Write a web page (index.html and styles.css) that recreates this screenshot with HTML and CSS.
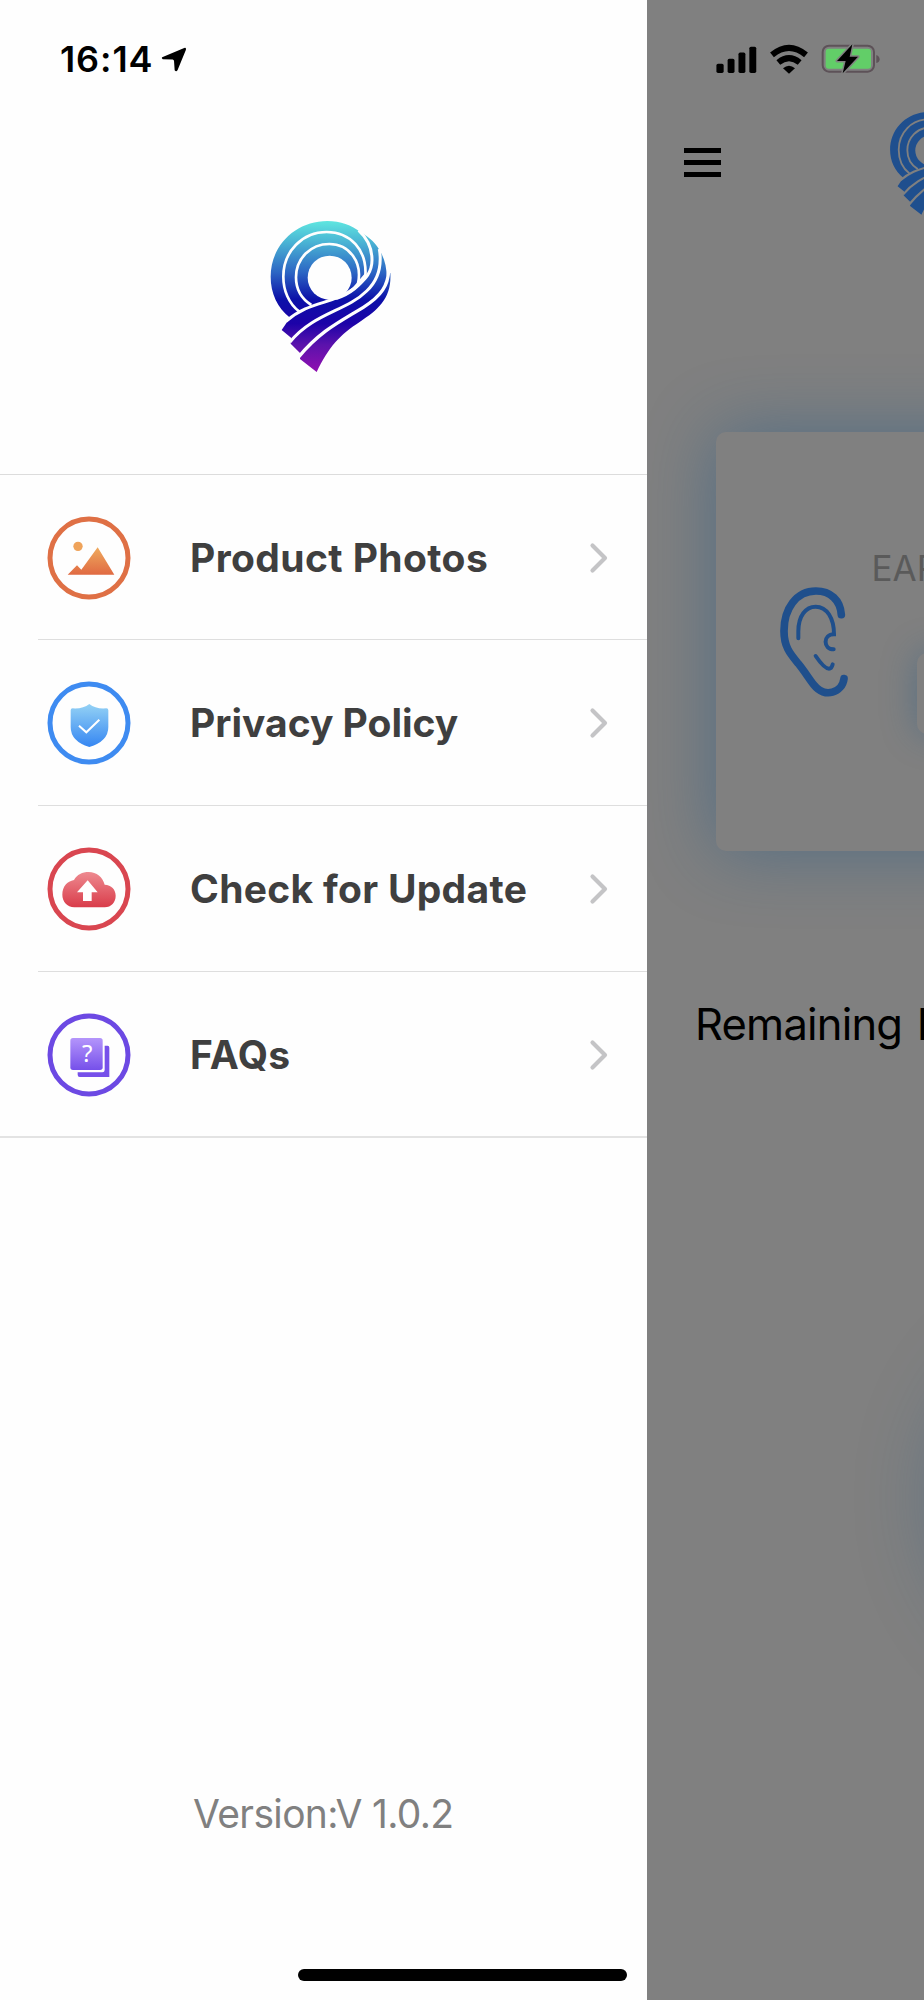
FILE: index.html
```html
<!DOCTYPE html>
<html lang="en">
<head>
<meta charset="utf-8">
<title>Menu</title>
<link rel="stylesheet" href="styles.css">
</head>
<body>
<svg class="defs" width="0" height="0" aria-hidden="true">
  <defs>
    <linearGradient id="gLogo" gradientUnits="userSpaceOnUse" x1="0" y1="48" x2="0" y2="500">
      <stop offset="0" stop-color="#5fe6e0"/><stop offset=".14" stop-color="#4ab4d4"/><stop offset=".34" stop-color="#2c66c4"/><stop offset=".52" stop-color="#0c10a8"/><stop offset=".68" stop-color="#1c02a8"/><stop offset=".82" stop-color="#5a12ac"/><stop offset="1" stop-color="#9010b0"/>
    </linearGradient>
    <linearGradient id="gOrange" x1="0" y1="0" x2="0" y2="1"><stop offset="0" stop-color="#efaa5e"/><stop offset="1" stop-color="#e06a42"/></linearGradient>
    <linearGradient id="gBlue" x1="0" y1="0" x2="0" y2="1"><stop offset="0" stop-color="#94d2f5"/><stop offset="1" stop-color="#3586f2"/></linearGradient>
    <linearGradient id="gRed" x1="0" y1="0" x2="0" y2="1"><stop offset="0" stop-color="#ee8a90"/><stop offset="1" stop-color="#d93c4a"/></linearGradient>
    <linearGradient id="gPurple" x1="0" y1="0" x2="0" y2="1"><stop offset="0" stop-color="#b495fb"/><stop offset="1" stop-color="#7650ea"/></linearGradient>
    <mask id="cuts" maskUnits="userSpaceOnUse" x="0" y="0" width="480" height="540">
      <rect width="480" height="540" fill="#fff"/>
      <circle cx="239" cy="218" r="66" fill="#000"/>
      <path d="M250 284Q300 262 322 232L345 205L352 212Q325 262 262 284Z" fill="#000"/>
      <g fill="none" stroke="#000" stroke-width="8">
        <path d="M148 320C116 296 100 256 100 215C100 138 158 81 230 81C300 81 352 134 346 214"/>
        <path d="M184 300C155 282 138 252 138 217C138 160 182 117 238 117C298 117 338 172 324 236"/>
        <path stroke-width="9" d="M108 349C180 286 245 300 310 252C350 222 366 200 366 165C366 130 350 98 326 76"/>
        <path stroke-width="9" d="M120 411C190 325 290 318 350 258C388 222 396 180 388 132"/>
        <path stroke-width="10" d="M146 456C210 378 270 350 340 307C396 272 414 240 416 196"/>
      </g>
    </mask>
    <symbol id="logo" viewBox="0 0 480 540">
      <path mask="url(#cuts)" d="M120 338C82 308 62 264 62 215C62 120 138 48 232 48C272 48 304 60 332 82C360 98 380 118 390 138C404 160 410 188 411 222L421 203C426 278 386 314 330 350C270 388 236 426 200 501L150 462L150 444L122 416L124 399L95 375Z"/>
    </symbol>
    <symbol id="chevron" viewBox="0 0 20 32"><path d="M3.5 3.5L16 16L3.5 28.500" fill="none" stroke="#c4c4c6" stroke-width="4.200" stroke-linecap="round" stroke-linejoin="round"/></symbol>
  </defs>
</svg>
<div class="screen">
  <aside class="drawer">
    <div class="clock">
      <span class="time">16:14</span>
      <svg class="location" viewBox="0 0 78 76"><path d="M3 31L70 3Q77 1 75 9L50 70Q46 77 41 71L39 42Q38 39 35 38L5 37Q0 35 3 31Z"/></svg>
    </div>
    <svg class="brand"><use href="#logo" fill="url(#gLogo)"/></svg>
    <ul class="menu">
      <li class="item">
        <svg class="icon" viewBox="0 0 252 252"><circle cx="126" cy="126" r="117" fill="none" stroke="#df7045" stroke-width="15"/><circle cx="93" cy="91" r="14" fill="#efa35a"/><path fill="url(#gOrange)" d="M62 176L90 148L103 161L152 94L202 176Z"/></svg>
        <span class="label">Product Photos</span><svg class="chevron"><use href="#chevron"/></svg>
      </li>
      <li class="item">
        <svg class="icon" viewBox="0 0 252 252"><circle cx="126" cy="126" r="117" fill="none" stroke="#3e8bf1" stroke-width="15"/><path fill="url(#gBlue)" d="M127 69Q147 85 178 82Q184 82 184 88V138Q184 181 127 198Q71 181 71 138V88Q71 82 77 82Q108 84 127 69Z"/><path d="M96 134L118 154L157 116" fill="none" stroke="#fff" stroke-width="6"/></svg>
        <span class="label privacy">Privacy Policy</span><svg class="chevron"><use href="#chevron"/></svg>
      </li>
      <li class="item">
        <svg class="icon" viewBox="0 0 252 252"><circle cx="126" cy="126" r="117" fill="none" stroke="#d94650" stroke-width="15"/><path fill="url(#gRed)" d="M82 181C60 179 46 164 46 143C46 119 60 103 81 99C90 83 106 75 125 75C149 75 167 90 173 113C193 114 206 127 206 146C206 166 193 180 173 181Z"/><path fill="#fff" d="M122 100L152 136H134V162H108V136H90Z"/></svg>
        <span class="label update">Check for Update</span><svg class="chevron"><use href="#chevron"/></svg>
      </li>
      <li class="item">
        <svg class="icon" viewBox="0 0 252 252"><circle cx="126" cy="126" r="117" fill="none" stroke="#6c49e3" stroke-width="15"/><rect x="70" y="75" width="97" height="96" rx="8" fill="url(#gPurple)"/><path fill="#7650ea" d="M173 98H182Q187 98 187 104V192H98Q92 192 92 185V178H166Q173 178 173 171Z"/><text class="question" x="121" y="147" text-anchor="middle">?</text></svg>
        <span class="label">FAQs</span><svg class="chevron"><use href="#chevron"/></svg>
      </li>
    </ul>
    <div class="version">Version:V 1.0.2</div>
    <div class="home-bar"></div>
  </aside>
  <main class="page">
    <div class="status">
      <svg class="signal" viewBox="0 0 122 82"><rect x="0" y="54" width="22" height="28" rx="5"/><rect x="34" y="39" width="21" height="43" rx="5"/><rect x="67" y="20" width="21" height="62" rx="5"/><rect x="100" y="2" width="21" height="80" rx="5"/></svg>
      <svg class="wifi" viewBox="0 0 114 86"><g fill="none" stroke="#000" stroke-width="18"><path d="M6 29Q57-13 108 29"/><path d="M25 52Q57 26 89 52"/></g><path d="M39 69Q57 54 75 69L57 86Z"/></svg>
      <svg class="battery" viewBox="0 0 180 90"><rect x="5" y="5" width="154" height="78" rx="19" fill="none" stroke="#5d5258" stroke-width="6"/><rect x="14" y="14" width="136" height="60" rx="9" fill="#62ce68"/><path d="M166 33Q176 37 176 46T166 57Z" fill="#5d5258"/><path d="M94 1L48 51H74L65 88L111 38H86Z" fill="#000" stroke="#808080" stroke-width="9" paint-order="stroke" stroke-linejoin="round"/></svg>
    </div>
    <div class="topbar">
      <div class="burger"><i></i><i></i><i></i></div>
      <svg class="brand-small"><use href="#logo" fill="#1f4f8e"/></svg>
    </div>
    <section class="card">
      <svg class="ear" viewBox="0 0 204 330" fill="none" stroke="#1f4f8c" stroke-linecap="round"><path stroke-width="23" d="M184 83C181 39 151 12 108 12C48 12 12 66 12 132C12 180 31 201 55 230C73 252 86 274 101 293C135 337 187 315 192 275"/><path stroke-width="12" d="M55 154V133C55 87 77 59 107 59C141 59 162 94 162 142C128 142 129 187 161 187M107 207C124 232 137 245 147 245Q155 245 158 232"/></svg>
      <div class="reading"><div class="ear-label">EAR</div><div class="value"></div></div>
    </section>
    <h2 class="remaining">Remaining Battery</h2>
    <div class="dial"></div>
  </main>
</div>
</body>
</html>
```
FILE: styles.css
```css
* { box-sizing: border-box; }
body { margin: 0; font-family: Inter, "Liberation Sans", sans-serif; background: #fff; }
svg { display: block; flex: none; }
.defs { position: absolute; }
.screen { display: flex; width: 924px; height: 2000px; overflow: hidden; }

.drawer { display: flex; flex-direction: column; flex: none; width: 646.500px; height: 2000px; background: #fefefe; }
.clock { display: flex; align-items: center; height: 118px; padding-left: 60px; }
.time { width: 101px; font-size: 36px; font-weight: 600; letter-spacing: .9px; }
.location { width: 26px; height: 25px; }
.brand { width: 160px; height: 180px; margin: 87px 0 89px 250px; }
.menu { list-style: none; margin: 0; padding: 0; border-top: 1px solid #dcdcdc; border-bottom: 2px solid #e3e3e3; }
.item { display: flex; align-items: center; height: 165.700px; margin-left: 38px; padding: 1px 0 0 9px; }
.item:first-child { height: 164.300px; }
.item + .item { border-top: 1.500px solid #dedede; }
.icon { width: 84px; height: 84px; }
.label { flex: 1; margin-left: 59px; font-size: 39px; font-weight: 700; line-height: 48px; letter-spacing: .4px; color: #3f3f3f; white-space: nowrap; }
.privacy { letter-spacing: 0; }
.update { letter-spacing: .3px; }
.question { font: 72px "Noto Sans", sans-serif; fill: #fff; }
.chevron { width: 20px; height: 32px; margin-right: 38px; }
.version { margin: 652px 0 0 193px; font-size: 39px; line-height: 48px; letter-spacing: -.65px; color: #808080; white-space: nowrap; }
.home-bar { width: 329px; height: 12px; margin: auto 0 19px 298px; border-radius: 6px; background: #000; }

.page { flex: 1; min-width: 0; height: 2000px; overflow: hidden; background: #808080; }
.status { display: flex; align-items: center; height: 118px; padding-left: 69px; }
.signal { width: 41px; height: 27px; }
.wifi { width: 38px; height: 29px; margin-left: 13px; overflow: visible; }
.battery { width: 60px; height: 30px; margin-left: 13px; }
.topbar { display: flex; height: 180px; padding-left: 37.500px; }
.burger { display: flex; flex: none; flex-direction: column; gap: 7px; width: 37px; margin-top: 29.500px; }
.burger i { height: 5.300px; background: #000; }
.brand-small { width: 109px; height: 122.600px; margin: -17px 0 0 155px; }
.card { display: flex; width: 784px; height: 419px; margin: 134px 0 0 69px; border-radius: 10px; background: #808080; box-shadow: 0 0 70px rgba(31, 87, 135, .48); }
.ear { width: 68px; height: 110px; margin: 155px 0 0 64px; }
.reading { margin: 115px 0 0 24px; }
.ear-label { font-size: 35px; font-weight: 400; line-height: 42px; color: #5a5a5a; }
.value { width: 400px; height: 81px; margin: 64px 0 0 45px; border-radius: 10px; background: #808080; box-shadow: 0 0 35px rgba(31, 87, 135, .4); }
.remaining { margin: 146px 0 0 48.500px; font-size: 43.500px; font-weight: 400; line-height: 54px; letter-spacing: -.8px; word-spacing: 3px; color: #000; white-space: nowrap; }
.dial { width: 340px; height: 340px; margin: 276px 0 0 291px; border-radius: 50%; background: #808080; box-shadow: 0 0 80px rgba(31, 87, 135, .38); }
```
